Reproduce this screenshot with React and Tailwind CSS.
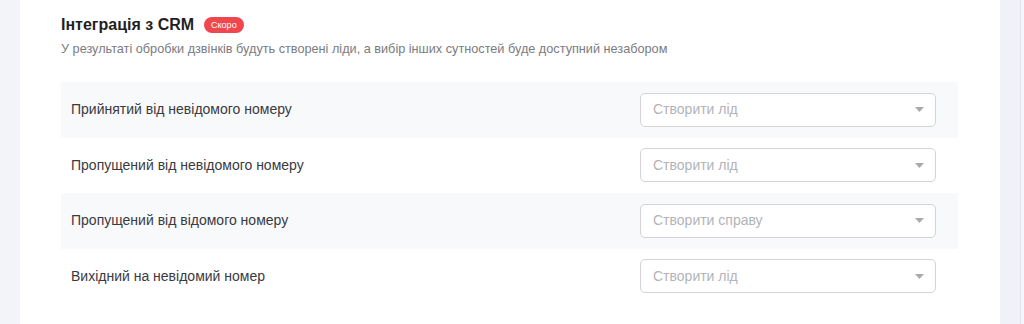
const rows = [
  { label: 'Прийнятий від невідомого номеру', value: 'Створити лід', shaded: true },
  { label: 'Пропущений від невідомого номеру', value: 'Створити лід' },
  { label: 'Пропущений від відомого номеру', value: 'Створити справу', shaded: true },
  { label: 'Вихідний на невідомий номер', value: 'Створити лід' },
];

function Select({ value }) {
  return (
    <div className="w-[296px] h-[34px] rounded-[5px] border border-[#d4d4d8] bg-white flex items-center justify-between pl-[12px] pr-[11px]">
      <span className="text-[14px] text-[#b3b3b8]">{value}</span>
      <svg width="9" height="5" viewBox="0 0 9 5" className="fill-[#a9a9ae]">
        <path d="M0 0h9L4.5 5z" />
      </svg>
    </div>
  );
}

export default function App() {
  return (
    <div className="flex h-[324px] w-[1024px] bg-[#f3f4f9] font-['Liberation_Sans',Arial,sans-serif] overflow-hidden">
      <div className="w-[20px] shrink-0" />
      <div className="w-[980px] shrink-0 bg-white pl-[41px] pt-[15px]">
        <div className="flex items-center gap-[10px] h-[20px]">
          <h2 className="text-[16px] font-bold text-[#1f1f23]">Інтеграція з CRM</h2>
          <span className="h-[16px] px-[7px] rounded-full bg-[#f0474f] text-white text-[9px] leading-[16px]">Скоро</span>
        </div>
        <p className="mt-[5px] text-[12.7px] text-[#7b7b80]">
          У результаті обробки дзвінків будуть створені ліди, а вибір інших сутностей буде доступний незабором
        </p>
        <div className="mt-[23px] w-[897px]">
          {rows.map((r) => (
            <div
              key={r.label}
              className={`h-[55.5px] flex items-center justify-between pl-[10px] pr-[22px] ${r.shaded ? 'bg-[#f8f9fb]' : 'bg-white'}`}
            >
              <span className="text-[14px] text-[#3a3a3f]">{r.label}</span>
              <Select value={r.value} />
            </div>
          ))}
        </div>
      </div>
      <div className="flex-1 flex">
        <div className="w-[20px] bg-[#f1f2f8]" />
        <div className="w-[1px] bg-[#e1e2ec]" />
        <div className="flex-1 bg-[#f5f6fa]" />
      </div>
    </div>
  );
}
